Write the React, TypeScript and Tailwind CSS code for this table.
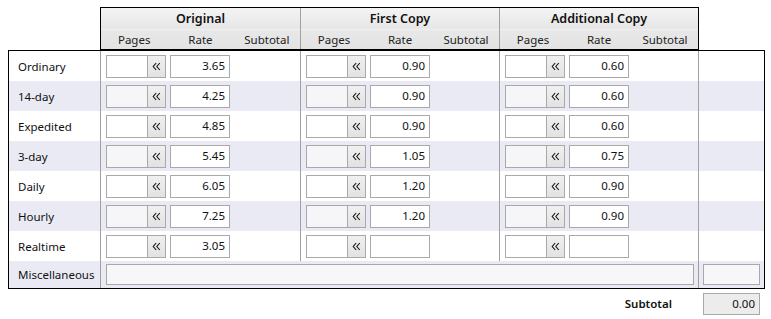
import React from "react";

type Rate = { label: string; original: string; first: string; additional: string };

const rows: Rate[] = [
  { label: "Ordinary", original: "3.65", first: "0.90", additional: "0.60" },
  { label: "14-day", original: "4.25", first: "0.90", additional: "0.60" },
  { label: "Expedited", original: "4.85", first: "0.90", additional: "0.60" },
  { label: "3-day", original: "5.45", first: "1.05", additional: "0.75" },
  { label: "Daily", original: "6.05", first: "1.20", additional: "0.90" },
  { label: "Hourly", original: "7.25", first: "1.20", additional: "0.90" },
  { label: "Realtime", original: "3.05", first: "", additional: "" },
];

const groups = ["Original", "First Copy", "Additional Copy"];

// Double left chevron used on the "fill pages" button
function DoubleChevron() {
  return (
    <svg width="9" height="9" viewBox="0 0 9 9" fill="none" stroke="#111" strokeWidth="1.1">
      <path d="M4.2 1 L1.2 4.5 L4.2 8" />
      <path d="M7.8 1 L4.8 4.5 L7.8 8" />
    </svg>
  );
}

function PagesBox({ shaded }: { shaded: boolean }) {
  return (
    <div className="flex h-[23px] w-[60px] border border-[#a9a9a9]">
      <div className={`flex-1 ${shaded ? "bg-[#f6f6f9]" : "bg-white"}`} />
      <div className="flex w-[18px] items-center justify-center border-l border-[#a9a9a9] bg-gradient-to-b from-[#f0f0f0] to-[#e2e2e2]">
        <DoubleChevron />
      </div>
    </div>
  );
}

function RateBox({ value }: { value: string }) {
  return (
    <div className="flex h-[23px] w-[60px] items-center justify-end border border-[#a9a9a9] bg-white pr-[4px] text-[11.5px] text-[#111]">
      {value}
    </div>
  );
}

function GroupCell({ value, shaded, first }: { value: string; shaded: boolean; first: boolean }) {
  return (
    <div
      className={`flex h-full items-center gap-[4px] border-l border-[#a0a0a0] pl-[5px] ${
        first ? "w-[200px]" : "w-[199px]"
      }`}
    >
      <PagesBox shaded={shaded} />
      <RateBox value={value} />
    </div>
  );
}

export default function App() {
  return (
    <div
      className="h-[319px] w-[771px] bg-white text-[#111]"
      style={{ fontFamily: '"Segoe UI", "Noto Sans", "Liberation Sans", sans-serif' }}
    >
      {/* column headings */}
      <div className="pt-[7px] pl-[100px]">
        <div className="flex w-[599px] border border-black">
          {groups.map((g, i) => (
            <div
              key={g}
              className={`flex flex-col ${i === 0 ? "w-[199px]" : "w-[199px] border-l border-[#a0a0a0]"}`}
            >
              <div className="flex h-[21px] items-center justify-center bg-gradient-to-b from-[#f4f4f4] to-[#e6e6e6] pt-[1px] text-[12.5px] font-semibold">
                {g}
              </div>
              <div className="grid h-[20px] grid-cols-3 items-center border-t border-[#f0f0f0] bg-gradient-to-b from-[#e8e8e8] to-[#e3e3e3] pt-[1px] text-center text-[11.5px] text-[#222]">
                <span>Pages</span>
                <span>Rate</span>
                <span>Subtotal</span>
              </div>
            </div>
          ))}
        </div>
      </div>

      {/* rate table */}
      <div className="ml-[8px] w-[757px] border border-black">
        {rows.map((r, i) => {
          const shaded = i % 2 === 1;
          return (
            <div key={r.label} className={`flex h-[30px] ${shaded ? "bg-[#eaeaf4]" : "bg-white"}`}>
              <div className="flex w-[91px] items-center pl-[9px] pt-[1px] text-[11.5px]">{r.label}</div>
              <GroupCell value={r.original} shaded={shaded} first />
              <GroupCell value={r.first} shaded={shaded} first={false} />
              <GroupCell value={r.additional} shaded={shaded} first={false} />
              <div className="flex-1 border-l border-[#a0a0a0]" />
            </div>
          );
        })}
        <div className="flex h-[27px] bg-[#eaeaf4]">
          <div className="flex w-[91px] items-center pl-[9px] text-[11.5px]">Miscellaneous</div>
          <div className="flex w-[598px] items-center border-l border-[#a0a0a0] pl-[5px] pr-[4px]">
            <div className="h-[21px] flex-1 border border-[#a9a9a9] bg-[#f7f7f9]" />
          </div>
          <div className="flex flex-1 items-center border-l border-[#a0a0a0] pl-[4px] pr-[4px]">
            <div className="h-[21px] flex-1 border border-[#a9a9a9] bg-[#f7f7f9]" />
          </div>
        </div>
      </div>

      {/* grand subtotal */}
      <div className="flex items-center justify-end pt-[4px] pr-[11px]">
        <span className="mr-[31px] text-[11.5px] font-semibold">Subtotal</span>
        <div className="flex h-[22px] w-[57px] items-center justify-end border border-[#a9a9a9] bg-[#ececec] pr-[4px] text-[11.5px]">
          0.00
        </div>
      </div>
    </div>
  );
}
